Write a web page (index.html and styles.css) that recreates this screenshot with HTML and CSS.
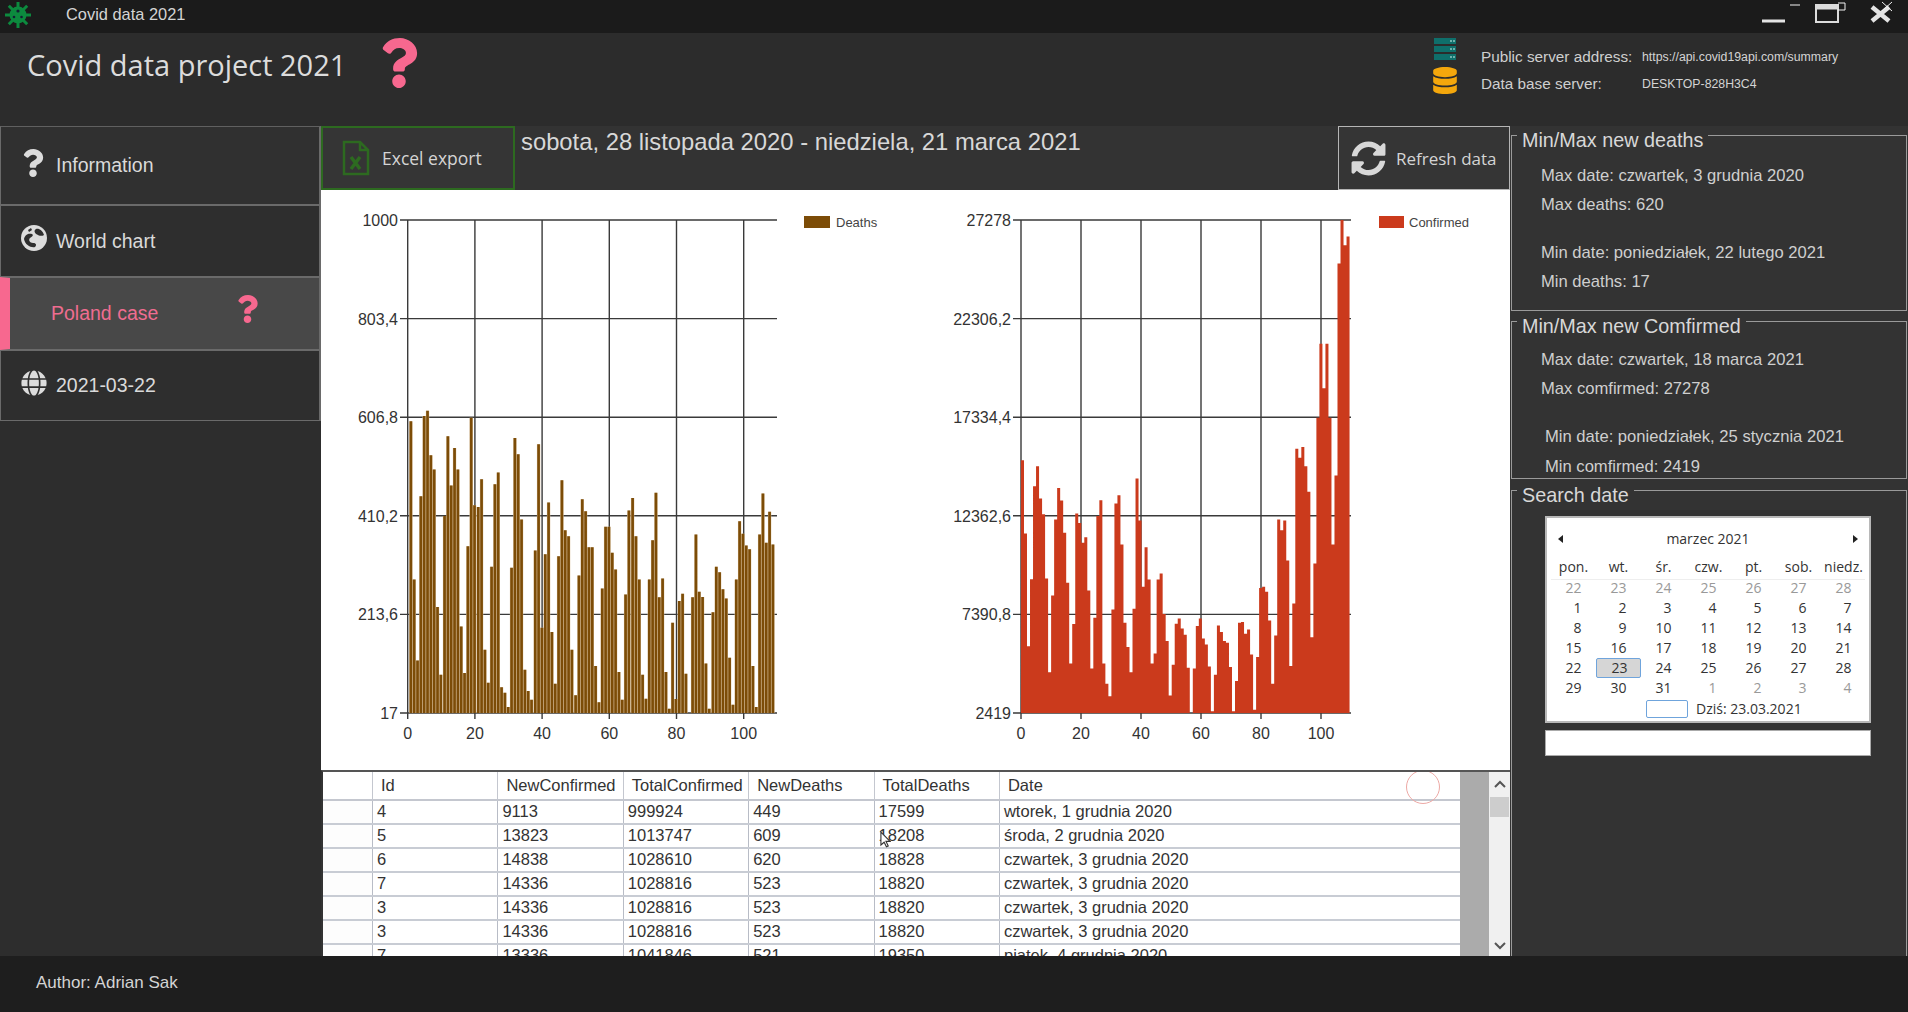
FILE: index.html
```html
<!DOCTYPE html>
<html lang="pl">
<head>
<meta charset="utf-8">
<title>Covid data 2021</title>
<link rel="stylesheet" href="styles.css">
</head>
<body>
<div class="app">
  <header class="titlebar">
    <svg class="logo" viewBox="0 0 26 26"><g stroke="#0c8a3e" stroke-width="3"><path d="M13 0V26M0 13H26M3.8 3.8L22.2 22.2M22.2 3.8L3.8 22.2"/></g><circle cx="13" cy="13" r="8.5" fill="#0c8a3e"/><circle cx="13" cy="9" r="1.6" fill="#123"/><circle cx="9" cy="15" r="1.3" fill="#123"/><circle cx="16.5" cy="15" r="1.3" fill="#123"/></svg>
    <span class="app-name">Covid data 2021</span>
    <svg class="winbtns" viewBox="0 0 150 26">
      <path class="w-thick" d="M2 21H25"/><path class="w-thin" d="M30 5H40"/>
      <path class="w-box" d="M56 5H78V22H56Z"/><path class="w-bar" d="M56 7H78"/><path class="w-thin-box" d="M78 3H85V10H78"/>
      <path class="w-thick-x" d="M112 7L129 21M129 7L112 21"/><path class="w-thin" d="M122 2L132 11M132 2L122 11"/>
    </svg>
  </header>

  <section class="topbar">
    <h1 class="project-title">Covid data project 2021</h1>
    <svg class="q q-big" viewBox="0 0 384 512"><path d="M202.021 0C122.202 0 70.503 32.703 29.914 91.026c-7.363 10.58-5.093 25.086 5.178 32.874l43.138 32.709c10.373 7.865 25.132 6.026 33.253-4.148 25.049-31.381 43.63-49.449 82.757-49.449 30.764 0 68.816 19.799 68.816 49.631 0 22.552-18.617 34.134-48.993 51.164-35.423 19.86-82.299 44.576-82.299 106.405V320c0 13.255 10.745 24 24 24h72.471c13.255 0 24-10.745 24-24v-5.773c0-42.86 125.268-44.645 125.268-160.627C377.504 66.256 286.902 0 202.021 0zM192 373.459c-38.196 0-69.271 31.075-69.271 69.271 0 38.195 31.075 69.27 69.271 69.27s69.271-31.075 69.271-69.271-31.075-69.27-69.271-69.27z"/></svg>
    <div class="server-icons">
      <svg class="ic-server" viewBox="0 0 24 22"><path class="srv" d="M1 0H23V6H1ZM1 8H23V14H1ZM1 16H23V22H1Z"/><path class="srv-dot" d="M17 2H19V4H17ZM20 2H22V4H20ZM17 10H19V12H17ZM20 10H22V12H20ZM17 18H19V20H17ZM20 18H22V20H20Z"/></svg>
      <svg class="ic-db" viewBox="0 0 448 512"><path d="M448 73.143v45.714C448 159.143 347.667 192 224 192S0 159.143 0 118.857V73.143C0 32.857 100.333 0 224 0s224 32.857 224 73.143zM448 176v102.857C448 319.143 347.667 352 224 352S0 319.143 0 278.857V176c48.125 33.143 136.208 48.572 224 48.572S399.874 209.143 448 176zm0 160v102.857C448 479.143 347.667 512 224 512S0 479.143 0 438.857V336c48.125 33.143 136.208 48.572 224 48.572S399.874 369.143 448 336z"/></svg>
    </div>
    <dl class="server-info">
      <dt>Public server address:</dt><dd>https://api.covid19api.com/summary</dd>
      <dt>Data base server:</dt><dd>DESKTOP-828H3C4</dd>
    </dl>
  </section>

  <main class="main">
    <nav class="sidebar">
      <a class="nav-item h78">
        <svg class="nav-ic q-white" viewBox="0 0 384 512"><path d="M202.021 0C122.202 0 70.503 32.703 29.914 91.026c-7.363 10.58-5.093 25.086 5.178 32.874l43.138 32.709c10.373 7.865 25.132 6.026 33.253-4.148 25.049-31.381 43.63-49.449 82.757-49.449 30.764 0 68.816 19.799 68.816 49.631 0 22.552-18.617 34.134-48.993 51.164-35.423 19.86-82.299 44.576-82.299 106.405V320c0 13.255 10.745 24 24 24h72.471c13.255 0 24-10.745 24-24v-5.773c0-42.86 125.268-44.645 125.268-160.627C377.504 66.256 286.902 0 202.021 0zM192 373.459c-38.196 0-69.271 31.075-69.271 69.271 0 38.195 31.075 69.27 69.271 69.27s69.271-31.075 69.271-69.271-31.075-69.27-69.271-69.27z"/></svg>
        <span>Information</span>
      </a>
      <a class="nav-item h72 up">
        <svg class="nav-ic earth" viewBox="0 0 26 26"><circle cx="13" cy="13" r="13" class="earth-bg"/><path class="earth-land" d="M3 14C4 9 8 8 11 9C13 10 11 12 9 13C7 15 9 18 12 18C15 18 16 20 14 22C10 23 4 20 3 14ZM15 4C18 3 22 6 23 10C20 12 17 10 15 9C13 7 13 5 15 4ZM7 5L10 3L11 5L8 7Z"/></svg>
        <span>World chart</span>
      </a>
      <a class="nav-item h73 active">
        <span>Poland case</span>
        <svg class="q q-small" viewBox="0 0 384 512"><path d="M202.021 0C122.202 0 70.503 32.703 29.914 91.026c-7.363 10.58-5.093 25.086 5.178 32.874l43.138 32.709c10.373 7.865 25.132 6.026 33.253-4.148 25.049-31.381 43.63-49.449 82.757-49.449 30.764 0 68.816 19.799 68.816 49.631 0 22.552-18.617 34.134-48.993 51.164-35.423 19.86-82.299 44.576-82.299 106.405V320c0 13.255 10.745 24 24 24h72.471c13.255 0 24-10.745 24-24v-5.773c0-42.86 125.268-44.645 125.268-160.627C377.504 66.256 286.902 0 202.021 0zM192 373.459c-38.196 0-69.271 31.075-69.271 69.271 0 38.195 31.075 69.27 69.271 69.27s69.271-31.075 69.271-69.271-31.075-69.27-69.271-69.27z"/></svg>
      </a>
      <a class="nav-item h71">
        <svg class="nav-ic earth" viewBox="0 0 496 512"><path class="earth-bg" d="M336.5 160C322 70.7 287.8 8 248 8s-74 62.7-88.5 152h177zM152 256c0 22.2 1.2 43.5 3.3 64h185.3c2.1-20.5 3.3-41.8 3.3-64s-1.2-43.5-3.3-64H155.3c-2.1 20.5-3.3 41.8-3.3 64zm324.7-96c-28.6-67.9-86.5-120.4-158-141.6 24.4 33.8 41.2 84.7 50 141.6h108zM177.2 18.4C105.8 39.6 47.8 92.1 19.3 160h108c8.7-56.9 25.5-107.8 49.9-141.6zM487.4 192H372.7c2.1 21 3.3 42.5 3.3 64s-1.2 43-3.3 64h114.6c5.5-20.5 8.6-41.8 8.6-64s-3.1-43.5-8.5-64zM120 256c0-21.5 1.2-43 3.3-64H8.6C3.2 212.5 0 233.8 0 256s3.2 43.5 8.6 64h114.6c-2-21-3.2-42.5-3.2-64zm39.5 96c14.5 89.3 48.7 152 88.5 152s74-62.7 88.5-152h-177zm159.3 141.6c71.4-21.2 129.4-73.7 158-141.6h-108c-8.8 56.9-25.6 107.8-50 141.6zM19.3 352c28.6 67.9 86.5 120.4 158 141.6-24.4-33.8-41.2-84.7-50-141.6h-108z"/></svg>
        <span>2021-03-22</span>
      </a>
    </nav>

    <div class="center">
      <div class="toolbar">
        <button class="tb-btn excel">
          <svg class="ic-excel" viewBox="0 0 28 36"><path d="M2 2H18L26 10V34H2Z M18 2V10H26"/><path class="x" d="M9 17L18 29M18 17L9 29"/></svg>
          <span>Excel export</span>
        </button>
        <div class="range">sobota, 28 listopada 2020 - niedziela, 21 marca 2021</div>
        <button class="tb-btn refresh">
          <svg class="ic-refresh" viewBox="0 0 512 512"><path d="M370.72 133.28C339.458 104.008 298.888 87.962 255.848 88c-77.458.068-144.328 53.178-162.791 126.85-1.344 5.363-6.122 9.15-11.651 9.15H24.103c-7.498 0-13.194-6.807-11.807-14.176C33.933 94.924 134.813 8 256 8c66.448 0 126.791 26.136 171.315 68.685L463.03 40.97C478.149 25.851 504 36.559 504 57.941V192c0 13.255-10.745 24-24 24H345.941c-21.382 0-32.09-25.851-16.971-40.971l41.75-41.749zM32 296h134.059c21.382 0 32.09 25.851 16.971 40.971l-41.75 41.75c31.262 29.273 71.835 45.319 114.876 45.28 77.418-.07 144.315-53.144 162.787-126.849 1.344-5.363 6.122-9.15 11.651-9.15h57.304c7.498 0 13.194 6.807 11.807 14.176C478.067 417.076 377.187 504 256 504c-66.448 0-126.791-26.136-171.315-68.685L48.97 471.03C33.851 486.149 8 475.441 8 454.059V320c0-13.255 10.745-24 24-24z"/></svg>
          <span>Refresh data</span>
        </button>
      </div>

      <div class="charts">
        <svg class="chart c1" viewBox="321 190 599 580">
          <path class="grid" d="M400 220H777M400 318.6H777M400 417.2H777M400 515.8H777M400 614.4H777M400 713H777M407.7 220V719M474.9 220V719M542.1 220V719M609.3 220V719M676.5 220V719M743.7 220V719"/>
          <g transform="translate(319.8 200) scale(.3702 .357)">
            <defs><path id="deaths" d="M246 620V1437M255 1063V1437M264 1290V1437M273 830V1437M282 605V1437M291 590V1437M300 715V1437M309 755V1437M318 1140V1437M327 1330V1437M337 885V1437M346 662V1437M355 800V1437M364 695V1437M373 755V1437M382 1195V1437M391 1325V1437M400 970V1437M409 610V1437M418 855V1437M428 860V1437M437 782V1437M446 1260V1437M455 1352V1437M464 1027V1437M473 796V1437M482 763V1437M491 1365V1437M500 1380V1437M509 1420V1437M518 1030V1437M527 667V1437M536 712V1437M545 895V1437M554 1316V1437M563 1375V1437M572 1400V1437M582 982V1437M591 684V1437M600 1198V1437M609 992V1437M618 847V1437M627 1210V1437M636 1355V1437M645 998V1437M654 785V1437M663 925V1437M672 942V1437M681 1260V1437M691 1387V1437M700 1052V1437M709 838V1437M718 872V1437M727 973V1437M736 973V1437M745 1305V1437M754 1407V1437M763 1088V1437M772 915V1437M781 915V1437M790 988V1437M799 1035V1437M808 1322V1437M817 1400V1437M826 1105V1437M835 870V1437M845 835V1437M854 942V1437M863 1063V1437M872 1330V1437M881 1397V1437M890 1063V1437M899 953V1437M908 820V1437M917 1113V1437M926 1060V1437M935 1322V1437M944 1425V1437M953 1184V1437M962 1398V1437M971 1123V1437M980 1103V1437M989 1327V1437M1007 1113V1437M1016 937V1437M1025 1097V1437M1034 1112V1437M1043 1298V1437M1052 1425V1437M1062 1155V1437M1071 1027V1437M1080 1043V1437M1089 1090V1437M1098 1116V1437M1107 1282V1437M1116 1414V1437M1125 1063V1437M1134 900V1437M1143 935V1437M1152 968V1437M1161 978V1437M1170 1305V1437M1179 1420V1437M1188 937V1437M1197 822V1437M1206 960V1437M1215 873V1437M1224 965V1437"/></defs>
            <use href="#deaths" class="bars-under"/>
            <use href="#deaths" class="bars-over"/>
          </g>
          <g class="axis-y"><text x="398" y="226">1000</text><text x="398" y="324.6">803,4</text><text x="398" y="423.2">606,8</text><text x="398" y="521.8">410,2</text><text x="398" y="620.4">213,6</text><text x="398" y="719">17</text></g>
          <g class="axis-x"><text x="407.7" y="739">0</text><text x="474.9" y="739">20</text><text x="542.1" y="739">40</text><text x="609.3" y="739">60</text><text x="676.5" y="739">80</text><text x="743.7" y="739">100</text></g>
          <rect class="sw-deaths" x="804" y="216" width="26" height="12"/>
          <text class="legend-txt" x="836" y="227">Deaths</text>
        </svg>
        <svg class="chart c2" viewBox="920 190 590 580">
          <path class="grid" d="M1013 220H1351M1013 318.6H1351M1013 417.2H1351M1013 515.8H1351M1013 614.4H1351M1013 713H1351M1021 220V719M1081 220V719M1141 220V719M1201 220V719M1261 220V719M1321 220V719"/>
          <g transform="translate(919.5 200) scale(.3717 .357)">
            <path class="bars-red" d="M273 1437V729h8.11V934h8.11V1250h8.11V1062h8.11V802h8.11V746h8.11V836h8.11V880h8.11V1060h8.11V1323h8.11V1108h8.11V895h8.11V807h8.11V842h8.11V932h8.11V1072h8.11V1298h8.11V1188h8.11V878h8.11V905h8.11V960h8.11V945h8.11V1094h8.11V1312h8.11V1170h8.11V885h8.11V841h8.11V1298h8.11V1355h8.11V1390h8.11V1147h8.11V850h8.11V827h8.11V965h8.11V1184h8.11V1252h8.11V1323h8.11V1145h8.11V780h8.11V898h8.11V1083h8.11V973h8.11V1063h8.11V1298h8.11V1270h8.11V1063h8.11V1046h8.11V1160h8.11V1235h8.11V1388h8.11V1302h8.11V1187h8.11V1172h8.11V1200h8.11V1218h8.11V1310h8.11V1437h8.11V1312h8.11V1193h8.11V1172h8.11V1228h8.11V1245h8.11V1307h8.11V1432h8.11V1330h8.11V1192h8.11V1210h8.11V1235h8.11V1240h8.11V1308h8.11V1432h8.11V1347h8.11V1184h8.11V1182h8.11V1215h8.11V1203h8.11V1273h8.11V1428h8.11V1280h8.11V1087h8.11V1083h8.11V1097h8.11V1178h8.11V1355h8.11V1220h8.11V895h8.11V925h8.11V898h8.11V1010h8.11V1305h8.11V1130h8.11V697h8.11V722h8.11V692h8.11V746h8.11V817h8.11V1225h8.11V1018h8.11V610h8.11V403h8.11V527h8.11V403h8.11V610h8.11V965h8.11V772h8.11V178h8.11V56h8.11V127h8.11V102h8.11V1437Z"/>
          </g>
          <g class="axis-y"><text x="1011" y="226">27278</text><text x="1011" y="324.6">22306,2</text><text x="1011" y="423.2">17334,4</text><text x="1011" y="521.8">12362,6</text><text x="1011" y="620.4">7390,8</text><text x="1011" y="719">2419</text></g>
          <g class="axis-x"><text x="1021" y="739">0</text><text x="1081" y="739">20</text><text x="1141" y="739">40</text><text x="1201" y="739">60</text><text x="1261" y="739">80</text><text x="1321" y="739">100</text></g>
          <rect class="sw-confirmed" x="1379" y="216" width="25" height="12"/>
          <text class="legend-txt" x="1409" y="227">Confirmed</text>
        </svg>
      </div>

      <div class="grid-panel">
        <div class="table-wrap">
          <table class="data">
            <colgroup><col class="c-head"><col class="c-w"><col class="c-w"><col class="c-w"><col class="c-w"><col class="c-w"><col></colgroup>
            <thead><tr><th></th><th>Id</th><th>NewConfirmed</th><th>TotalConfirmed</th><th>NewDeaths</th><th>TotalDeaths</th><th>Date</th></tr></thead>
            <tbody>
              <tr><th></th><td>4</td><td>9113</td><td>999924</td><td>449</td><td>17599</td><td>wtorek, 1 grudnia 2020</td></tr>
              <tr><th></th><td>5</td><td>13823</td><td>1013747</td><td>609</td><td>18208</td><td>środa, 2 grudnia 2020</td></tr>
              <tr><th></th><td>6</td><td>14838</td><td>1028610</td><td>620</td><td>18828</td><td>czwartek, 3 grudnia 2020</td></tr>
              <tr><th></th><td>7</td><td>14336</td><td>1028816</td><td>523</td><td>18820</td><td>czwartek, 3 grudnia 2020</td></tr>
              <tr><th></th><td>3</td><td>14336</td><td>1028816</td><td>523</td><td>18820</td><td>czwartek, 3 grudnia 2020</td></tr>
              <tr><th></th><td>3</td><td>14336</td><td>1028816</td><td>523</td><td>18820</td><td>czwartek, 3 grudnia 2020</td></tr>
              <tr><th></th><td>7</td><td>13336</td><td>1041846</td><td>521</td><td>19350</td><td>piątek, 4 grudnia 2020</td></tr>
            </tbody>
          </table>
          <span class="click-ring"></span>
          <svg class="cursor" viewBox="0 0 12 18"><path d="M1 1V15L4.5 12L7 17L9 16L6.5 11H11Z"/></svg>
        </div>
        <div class="scrollbar">
          <svg class="sb-arrow" viewBox="0 0 12 8"><path d="M1 7L6 2L11 7"/></svg>
          <div class="sb-thumb"></div>
          <svg class="sb-arrow sb-down" viewBox="0 0 12 8"><path d="M1 1L6 6L11 1"/></svg>
        </div>
      </div>
    </div>

    <aside class="right">
      <section class="group g1">
        <h2 class="group-title">Min/Max new deaths</h2>
        <p>Max date: czwartek, 3 grudnia 2020</p>
        <p>Max deaths: 620</p>
        <p class="gap">Min date: poniedziałek, 22 lutego 2021</p>
        <p>Min deaths: 17</p>
      </section>
      <section class="group g2">
        <h2 class="group-title">Min/Max new Comfirmed</h2>
        <p>Max date: czwartek, 18 marca 2021</p>
        <p>Max comfirmed: 27278</p>
        <p class="gap in">Min date: poniedziałek, 25 stycznia 2021</p>
        <p class="in low">Min comfirmed: 2419</p>
      </section>
      <section class="group g3">
        <h2 class="group-title">Search date</h2>
        <div class="calendar">
          <div class="cal-head"><i class="arr-l"></i><span>marzec 2021</span><i class="arr-r"></i></div>
          <div class="cal-dow"><span>pon.</span><span>wt.</span><span>śr.</span><span>czw.</span><span>pt.</span><span>sob.</span><span>niedz.</span></div>
          <div class="cal-days">
            <span class="mute">22</span><span class="mute">23</span><span class="mute">24</span><span class="mute">25</span><span class="mute">26</span><span class="mute">27</span><span class="mute">28</span>
            <span>1</span><span>2</span><span>3</span><span>4</span><span>5</span><span>6</span><span>7</span>
            <span>8</span><span>9</span><span>10</span><span>11</span><span>12</span><span>13</span><span>14</span>
            <span>15</span><span>16</span><span>17</span><span>18</span><span>19</span><span>20</span><span>21</span>
            <span>22</span><span class="sel">23</span><span>24</span><span>25</span><span>26</span><span>27</span><span>28</span>
            <span>29</span><span>30</span><span>31</span><span class="mute">1</span><span class="mute">2</span><span class="mute">3</span><span class="mute">4</span>
          </div>
          <div class="cal-today"><i class="today-box"></i><span>Dziś: 23.03.2021</span></div>
        </div>
        <div class="date-input"></div>
      </section>
    </aside>
  </main>

  <footer class="footer">Author: Adrian Sak</footer>
</div>
</body>
</html>
```
FILE: styles.css
```css
* { box-sizing: border-box; }
html, body { margin: 0; padding: 0; }
body { width: 1908px; height: 1012px; overflow: hidden; background: #2d2d2d; font-family: "Liberation Sans", Arial, sans-serif; color: #d8d8d8; }
.app { display: flex; flex-direction: column; height: 1012px; }

.titlebar { height: 33px; flex: none; display: flex; align-items: center; background: #1b1b1b; position: relative; }
.logo { width: 26px; height: 26px; margin: -4px 0 0 5px; flex: none; }
.app-name { margin: -4px 0 0 35px; font-size: 16.4px; color: #d4d4d4; }
.winbtns { position: absolute; left: 1760px; top: 0; width: 150px; height: 26px; fill: none; stroke-linecap: butt; }
.w-thick { stroke: #e4e4e4; stroke-width: 3; }
.w-thin { stroke: #f2f2f2; stroke-width: 1; }
.w-box { stroke: #dcdcdc; stroke-width: 2; }
.w-bar { stroke: #dcdcdc; stroke-width: 5; }
.w-thin-box { stroke: #f2f2f2; stroke-width: 1; }
.w-thick-x { stroke: #e4e4e4; stroke-width: 4.5; }

.topbar { height: 93px; flex: none; display: flex; align-items: flex-start; background: #2c2c2c; }
.project-title { margin: 13px 0 0 27px; font: 400 29px/38px "Open Sans", sans-serif; color: #dcdcdc; white-space: nowrap; width: 352.5px; }
.q path { fill: #f7688f; }
.q-big { width: 38px; height: 50px; margin-top: 5px; flex: none; }
.server-icons { margin: 5px 0 0 1015.5px; width: 24px; display: flex; flex-direction: column; gap: 7px; flex: none; }
.ic-server { width: 24px; height: 22px; display: block; }
.srv { fill: #0f6f6b; }
.srv-dot { fill: #6fb0ab; }
.ic-db { width: 24px; height: 27px; display: block; }
.ic-db path { fill: #f4a70c; }
.server-info { margin: 10px 0 0 24px; display: grid; grid-template-columns: 161px auto; grid-auto-rows: 27px; align-items: center; }
.server-info dt { font-size: 15.3px; color: #cfcfcf; }
.server-info dd { margin: 0; font-size: 12.3px; color: #d4d4d4; }

.main { flex: 1; min-height: 0; display: flex; }
.sidebar { width: 321px; flex: none; display: flex; flex-direction: column; }
.nav-item { display: flex; align-items: center; padding-left: 20px; gap: 11px; font-size: 19.5px; color: #dadada; border: 2px solid #6a6a6a; border-top-width: 1px; border-bottom-width: 1px; border-left-width: 1px; background: #2e2e2e; }
.h78 { height: 79px; border-top-color: #606060; background: #303030; }
.h72 { height: 72px; }
.h73 { height: 73px; }
.h71 { height: 71px; }
.nav-ic { flex: none; width: 24px; height: 28px; }
.q-white path { fill: #dcdcdc; }
.q-white { margin-top: -6px; }
.earth { height: 26px; width: 26px; margin-right: -2px; margin-top: -6px; }
.earth-bg { fill: #dcdcdc; }
.earth-land { fill: #2e2e2e; }
.active { background: #484848; color: #ef6d90; border-left: 10px solid #f7688f; padding-left: 41px; gap: 0; padding-bottom: 1px; }
.active span { width: 186px; }
.q-small { width: 21px; height: 30px; margin-top: -8px; }

.center { width: 1189px; flex: none; display: flex; flex-direction: column; }
.toolbar { height: 64px; flex: none; display: flex; background: #333; }
.tb-btn { display: flex; align-items: center; height: 64px; background: #353535; color: #d4d4d4; font: 400 17.5px "Open Sans", sans-serif; padding: 0; flex: none; }
.excel { width: 194px; border: 2px solid #2d6a20; padding-left: 19px; gap: 12px; }
.ic-excel { width: 28px; height: 36px; fill: none; stroke: #2d6a20; stroke-width: 2.5; flex: none; }
.ic-excel .x { stroke-width: 3.5; }
.range { margin: 1px 0 0 6px; flex: 1; font-size: 23.8px; line-height: 30px; color: #d8d8d8; white-space: nowrap; }
.refresh { width: 172px; border: 1.5px solid #b5b5b5; padding-left: 12px; gap: 10px; font-size: 17px; }
.ic-refresh { width: 35px; height: 37px; flex: none; }
.ic-refresh path { fill: #d8d8d8; }

.charts { height: 580px; flex: none; display: flex; background: #fff; }
.chart { display: block; height: 580px; flex: none; }
.c1 { width: 599px; }
.c2 { width: 590px; }
.grid { fill: none; stroke: #3a3a3a; stroke-width: 1.4; }
.bars-under { fill: none; stroke: #dcc4a2; stroke-width: 9.1; }
.bars-over { fill: none; stroke: #7c4c07; stroke-width: 7.2; }
.bars-red { fill: #cb3a1c; }
.axis-y text, .axis-x text { font: 16px "Liberation Sans", sans-serif; fill: #333; }
.axis-y text { text-anchor: end; }
.axis-x text { text-anchor: middle; }
.legend-txt { font: 13px "Liberation Sans", sans-serif; fill: #444; }
.sw-deaths { fill: #7c4c07; }
.sw-confirmed { fill: #cb3a1c; }

.grid-panel { height: 186px; flex: none; display: flex; background: #ababab; border-top: 2px solid #555; border-left: 2px solid #333; }
.table-wrap { position: relative; width: 1166px; flex: none; overflow: hidden; }
.data { width: 1137px; table-layout: fixed; border-collapse: collapse; font-size: 16.5px; color: #333; background: #fff; }
.c-head { width: 49.5px; }
.c-w { width: 125.4px; }
.data thead th { height: 28px; font-weight: 400; text-align: left; padding: 0 0 1px 8px; border-right: 1px solid #c4c7cf; border-bottom: 2px solid #c4c7cf; white-space: nowrap; }
.data thead th:last-child { border-right: 0; }
.data tbody th { border-right: 1px solid #b8bcc6; border-bottom: 2px solid #c8ccd4; background: #fdfdfd; }
.data td { height: 24px; padding: 0 0 2px 4px; border-right: 1px solid #b8bcc6; border-bottom: 2px solid #c8ccd4; white-space: nowrap; overflow: hidden; }
.data td:last-child { border-right: 0; }
.click-ring { position: absolute; left: 1083px; top: -2px; width: 34px; height: 34px; border-radius: 50%; border: 1.5px solid #eda9a5; }
.cursor { position: absolute; left: 557px; top: 59px; width: 11px; height: 17px; fill: #fff; stroke: #333; stroke-width: 1.2; }
.scrollbar { width: 21px; flex: none; background: #f0f0f0; display: flex; flex-direction: column; align-items: center; }
.sb-arrow { width: 12px; height: 8px; margin-top: 8px; fill: none; stroke: #555; stroke-width: 2; flex: none; }
.sb-thumb { width: 19px; height: 20px; margin-top: 9px; background: #cdcdcd; }
.sb-down { margin-top: auto; margin-bottom: 6px; }

.right { width: 398px; flex: none; background: #333; padding: 9px 1px 0 1px; display: flex; flex-direction: column; overflow: hidden; font-size: 16.6px; color: #cfcfcf; }
.group { position: relative; flex: none; border: 1.5px solid #9a9a9a; }
.group p { margin: 0; padding-left: 29px; height: 29px; line-height: 29px; white-space: nowrap; }
.group-title { position: absolute; left: 5px; top: -8px; margin: 0; padding: 0 5px; background: #333; font: 400 19.8px/24px "Liberation Sans", sans-serif; color: #d8d8d8; white-space: nowrap; }
.g1 { height: 176px; padding-top: 25px; }
.g1 .gap { margin-top: 19px; }
.g2 { height: 158px; margin-top: 10px; padding-top: 23px; }
.g2 .gap { margin-top: 19px; }
.g2 .in { padding-left: 33px; }
.g2 .low { margin-top: 1px; }
.g3 { height: 480px; margin-top: 11px; padding: 25px 0 0 33px; border-bottom: 0; }
.calendar { width: 326px; height: 207px; background: #fff; border: 2px solid #b8b8b8; padding: 0 4px; color: #333; font: 14px/20px "Open Sans", sans-serif; }
.cal-head { height: 40px; display: flex; align-items: center; justify-content: space-between; padding: 2px 7px 0 7px; font-size: 14px; }
.arr-l, .arr-r { width: 0; height: 0; border: 4px solid transparent; }
.arr-l { border-right: 5px solid #222; border-left: 0; }
.arr-r { border-left: 5px solid #222; border-right: 0; }
.cal-dow { display: grid; grid-template-columns: repeat(7, 45px); height: 20px; padding-bottom: 1px; text-align: center; border-bottom: 1px solid #eee; box-sizing: content-box; line-height: 18px; margin-bottom: -2px; }
.cal-days { display: grid; grid-template-columns: repeat(7, 45px); grid-auto-rows: 20px; text-align: right; }
.cal-days span { padding-right: 14.5px; position: relative; }
.mute { color: #999; }
.sel { background: #d6d6d6; border: 1.5px solid #6fa4dc; border-radius: 2px; padding-right: 12.5px !important; line-height: 17px; margin-right: 0; }
.cal-today { height: 20px; display: flex; align-items: center; padding-left: 95px; gap: 8px; margin-top: 1px; }
.today-box { width: 42px; height: 18px; border: 1.5px solid #6fa4dc; border-radius: 2px; }
.date-input { width: 326px; height: 26px; margin-top: 7px; background: #fff; border: 1px solid #aaa; }

.footer { height: 56px; flex: none; display: flex; align-items: center; padding: 0 0 3px 36px; background: #1e1e1e; font-size: 17px; color: #d4d4d4; }
```
